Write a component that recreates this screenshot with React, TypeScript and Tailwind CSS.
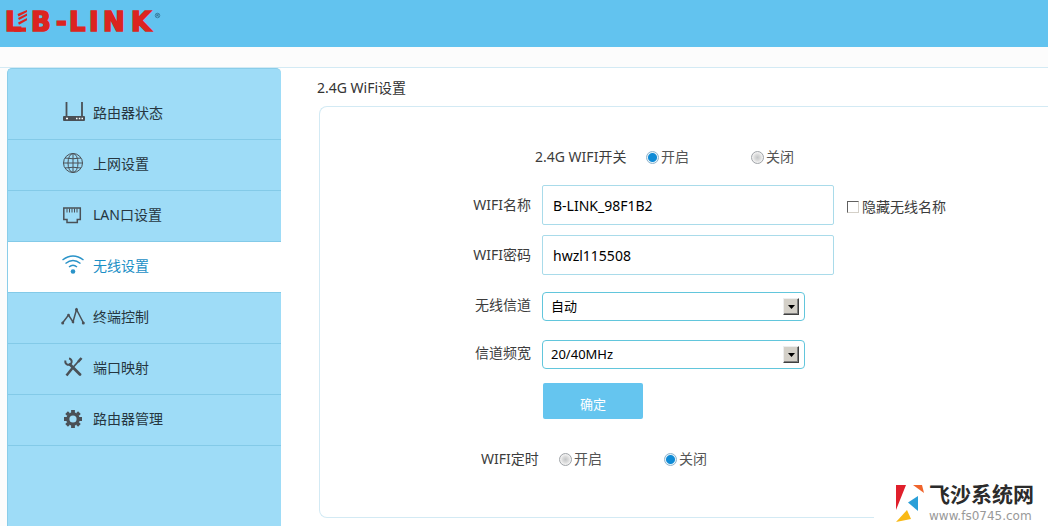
import React, { useState } from 'react';
import clsx from 'clsx';

function Logo() {
  return (
    <svg width="162" height="47" viewBox="0 0 162 47" className="text-[#dc2420]" fill="currentColor" role="img" aria-label="LB-LINK">
      <g
        fontFamily="'DejaVu Sans', sans-serif"
        fontWeight="700"
        fontSize="26"
        stroke="currentColor"
        strokeWidth="1.6"
      >
        <text x="5" y="31">L</text>
        <text x="31" y="31">B</text>
        <text x="56" y="31">-</text>
        <text x="69" y="31">L</text>
        <text x="89" y="31">I</text>
        <text x="103" y="31">N</text>
        <text x="131" y="31">K</text>
      </g>
      <path
        d="M14 11h13v14H14z"
        className="text-[#62c3ef]"
      />
      <path d="M17.500 14 27 10v2l-8.500 4.500Z M18 18l9-4.500v2.200L19 20Z M18 22.500l9-4.500v2.200l-8 4.500Z" />
      <path d="M14 27.500h12v4.300H14z" />
      <g className="text-[#2b6b8a]" fill="none" stroke="currentColor" strokeWidth="0.7">
        <circle cx="157.500" cy="15.500" r="2.300" />
        <path d="M156.800 16.800v-2.500h1c1 0 1 1.200 0 1.200h-1m1 0 .8 1.300" />
      </g>
    </svg>
  );
}

function RouterIcon() {
  return (
    <svg width="24" height="24" viewBox="0 0 24 24" fill="none" stroke="currentColor">
      <path d="M5.500 1v15M21 1v15" strokeWidth="1.800" />
      <rect x="2" y="15" width="22" height="5" rx="1" fill="currentColor" stroke="none" />
      <path d="M5 17.500h2M15 17.500h1.500M17.800 17.500h1.500M20.500 17.500h1.500" stroke="#fff" strokeWidth="1.500" />
    </svg>
  );
}

function GlobeIcon() {
  return (
    <svg width="24" height="24" viewBox="0 0 24 24" fill="none" stroke="currentColor" strokeWidth="1">
      <circle cx="12" cy="11" r="9.500" />
      <ellipse cx="12" cy="11" rx="5" ry="9.500" />
      <path d="M12 1.500v19M2.500 11h19M4 6q8 1.500 16 0M4 16q8-1.500 16 0" />
    </svg>
  );
}

function LanIcon() {
  return (
    <svg width="24" height="24" viewBox="0 0 24 24" fill="none" stroke="currentColor" strokeWidth="1.500">
      <path d="M2.800 5h16.500v11.500h-3v3H6v-3H2.800z" />
      <path d="M6 5.500v4M8.500 5.500v4M11 5.500v4M13.500 5.500v4M16 5.500v4" strokeWidth="1" />
    </svg>
  );
}

function WifiIcon() {
  return (
    <svg width="24" height="24" viewBox="0 0 24 24" fill="none" stroke="currentColor" strokeWidth="1.400">
      <path d="M1.500 6q10.500-8 21 0M4.500 9.500q7.500-6 15 0M8 13q4-3.500 8 0" />
      <circle cx="12" cy="17.500" r="2.300" fill="currentColor" stroke="none" />
    </svg>
  );
}

function ChartIcon() {
  return (
    <svg width="24" height="24" viewBox="0 0 24 24" fill="none" stroke="currentColor" strokeWidth="1.500">
      <path d="M1.500 18 7.500 10l4.500 7L15.500 4.500l7 13.500" />
      <g fill="currentColor" stroke="none">
        <circle cx="1.700" cy="18" r="1.500" />
        <circle cx="7.500" cy="10" r="1.300" />
        <circle cx="12" cy="17" r="1.300" />
        <circle cx="15.500" cy="4.500" r="1.500" />
        <circle cx="22.300" cy="18" r="1.500" />
      </g>
    </svg>
  );
}

function ToolsIcon() {
  return (
    <svg width="24" height="24" viewBox="0 0 24 24" fill="none" stroke="currentColor">
      <path d="M9 8.500 19 18.500" strokeWidth="2.800" strokeLinecap="round" />
      <path d="M4.500 4.500a3.200 3.200 0 1 0 3.500-2" strokeWidth="2" />
      <path d="M20 2.500 11.500 12" strokeWidth="1.800" />
      <path d="M20.500 2 17 6" strokeWidth="2.500" />
      <path d="M11.500 12 5.500 19.500" strokeWidth="2.500" />
    </svg>
  );
}

function GearIcon() {
  return (
    <svg width="24" height="24" viewBox="0 0 24 24" fill="none" stroke="currentColor">
      <circle cx="12" cy="12" r="5.200" strokeWidth="3.200" />
      <path
        d="M12 3v3M12 18v3M3 12h3M18 12h3M5.600 5.600l2 2M16.400 16.400l2 2M18.400 5.600l-2 2M7.600 16.400l-2 2"
        strokeWidth="3.800"
      />
    </svg>
  );
}

const menu = [
  { label: '路由器状态', icon: RouterIcon },
  { label: '上网设置', icon: GlobeIcon },
  { label: 'LAN口设置', icon: LanIcon },
  { label: '无线设置', icon: WifiIcon },
  { label: '终端控制', icon: ChartIcon },
  { label: '端口映射', icon: ToolsIcon },
  { label: '路由器管理', icon: GearIcon },
];

function Sidebar() {
  const [active, setActive] = useState(3);

  return (
    <nav className="w-[274px] shrink-0 rounded-t-[5px] border-l border-t border-[#8acde9] bg-[#9edcf7] pt-5">
      {menu.map(({ label, icon: Icon }, index) => (
        <a
          key={label}
          href="#"
          onClick={(e) => {
            e.preventDefault();
            setActive(index);
          }}
          className={clsx(
            'flex h-[51px] items-center gap-2 border-b border-[#83cae8] pb-0.5 pl-[53px]',
            index === active ? 'bg-white text-[#1b8fc6]' : 'text-[#263640]'
          )}
        >
          <span className={index === active ? 'text-[#2a93c8]' : 'text-[#4a5056]'}>
            <Icon />
          </span>
          {label}
        </a>
      ))}
    </nav>
  );
}

interface RadioProps {
  name: string;
  label: string;
  checked: boolean;
  onChange: () => void;
}

function Radio({ name, label, checked, onChange }: RadioProps) {
  return (
    <label className="flex w-[105px] items-center gap-0.5 text-[#555]">
      <input
        type="radio"
        name={name}
        checked={checked}
        onChange={onChange}
        className="size-[13px] appearance-none rounded-full border border-[#a0a4a8] bg-[radial-gradient(circle,#c4c6c8_0,#dcdcdc_3px,#f0f0f0_5px)] checked:border-[#8fb4cc] checked:bg-[radial-gradient(circle,#0f8bd6_0,#0f8bd6_4px,#e4f2fa_5px)]"
      />
      {label}
    </label>
  );
}

function Switch({ name, initial }: { name: string; initial: string }) {
  const [value, setValue] = useState(initial);

  return (
    <>
      {['开启', '关闭'].map((option) => (
        <Radio
          key={option}
          name={name}
          label={option}
          checked={value === option}
          onChange={() => setValue(option)}
        />
      ))}
    </>
  );
}

function TextRow({ id, label, value, children }: { id: string; label: string; value: string; children?: React.ReactNode }) {
  return (
    <div className="flex items-center">
      <label htmlFor={id} className="w-[211px] text-right">{label}</label>
      <input
        id={id}
        type="text"
        defaultValue={value}
        className="ml-[11px] h-10 w-[292px] rounded-xs border border-[#a9dbea] bg-white px-2.5 text-black outline-none"
      />
      {children}
    </div>
  );
}

function SelectRow({ id, label, options }: { id: string; label: string; options: string[] }) {
  return (
    <div className="flex items-center">
      <label htmlFor={id} className="w-[211px] pb-1 text-right">{label}</label>
      <div className="relative ml-[11px]">
        <select
          id={id}
          className="block h-[29px] w-[263px] appearance-none rounded-[4px] border border-[#62c6dc] bg-white px-2 text-[13px] text-black outline-none"
        >
          {options.map((option) => (
            <option key={option}>{option}</option>
          ))}
        </select>
        <span className="pointer-events-none absolute right-1.5 top-1.5 flex h-[17px] w-4 items-center justify-center border border-b-[#404040] border-l-[#eee] border-r-[#404040] border-t-[#eee] bg-[#d4d0c8] shadow-[inset_-1px_-1px_#808080]">
          <svg width="7" height="4" viewBox="0 0 7 4">
            <path d="M0 0h7L3.500 4z" />
          </svg>
        </span>
      </div>
    </div>
  );
}

function WifiForm() {
  return (
    <form
      onSubmit={(e) => e.preventDefault()}
      className="rounded-l-lg border-y border-l border-[#d3eaf4] bg-white pb-[43px] pt-[35px]"
    >
      <div className="flex h-[30px] items-center pl-[215px]">
        <span className="w-[111px]">2.4G WIFI开关</span>
        <Switch name="wifi" initial="开启" />
      </div>
      <div className="mt-[13px] flex flex-col gap-2.5">
        <TextRow id="ssid" label="WIFI名称" value="B-LINK_98F1B2">
          <label className="ml-[13px] flex items-center gap-[3px] pt-1">
            <input
              type="checkbox"
              className="size-3 appearance-none border border-b-[#d4d0c8] border-l-[#606060] border-r-[#d4d0c8] border-t-[#606060] bg-white checked:bg-[#0f8bd6]"
            />
            隐藏无线名称
          </label>
        </TextRow>
        <TextRow id="password" label="WIFI密码" value="hwzl115508" />
      </div>
      <div className="mt-[17px] flex flex-col gap-[19px]">
        <SelectRow id="channel" label="无线信道" options={['自动', '1', '6', '11']} />
        <SelectRow id="bandwidth" label="信道频宽" options={['20/40MHz', '20MHz', '40MHz']} />
      </div>
      <button
        type="submit"
        className="ml-[223px] mt-3.5 block h-9 w-[100px] rounded-xs bg-[#65c5ef] pt-1.5 text-[13px] text-white"
      >
        确定
      </button>
      <div className="mt-[25px] flex h-[30px] items-center pl-[161px]">
        <span className="w-[78px]">WIFI定时</span>
        <Switch name="timer" initial="关闭" />
      </div>
    </form>
  );
}

function Watermark() {
  return (
    <div className="absolute bottom-0 right-0 flex h-[50px] w-[174px] items-start gap-1 bg-white pl-[22px] pt-1">
      <svg width="29" height="44" viewBox="0 -4 29 44">
        <path d="M0 1h10L0 26z" fill="#e01f2b" />
        <path d="M17 1h9l2 8z" fill="#f0642b" />
        <path d="M12 18.500 22 12v15z" fill="#2a9fd8" />
        <path d="M11 26 15 35 0 38z" fill="#f9b915" />
      </svg>
      <div>
        <div className="text-[21px] font-bold leading-7 text-[#2b2b2b]">飞沙系统网</div>
        <div className="font-['DejaVu_Sans',sans-serif] text-xs leading-4 text-[#999]">www.fs0745.com</div>
      </div>
    </div>
  );
}

export default function App() {
  return (
    <div className="relative flex min-h-screen flex-col bg-[#fcfcfc] font-['Noto_Sans','Noto_Sans_CJK_SC',sans-serif] text-sm text-[#3c3c3c]">
      <header className="h-[47px] bg-[#62c3ef]">
        <Logo />
      </header>
      <div className="h-[21px] border-b border-[#d3eaf4]" />
      <div className="flex flex-1 pl-[7px]">
        <Sidebar />
        <main className="min-w-0 flex-1 bg-white pl-[38px] pt-2.5">
          <h1 className="-ml-0.5 mb-2 leading-5 text-[#333]">2.4G WiFi设置</h1>
          <WifiForm />
        </main>
      </div>
      <Watermark />
    </div>
  );
}
